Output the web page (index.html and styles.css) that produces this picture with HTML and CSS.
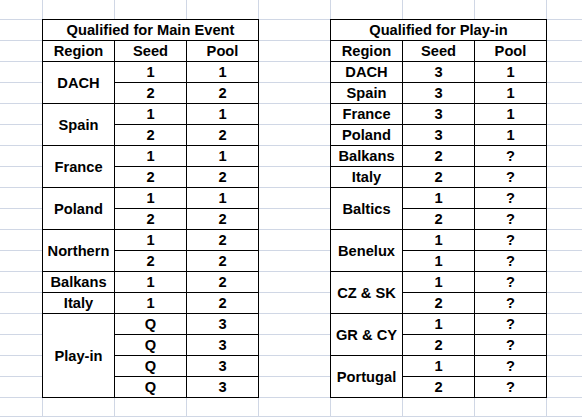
FILE: index.html
```html
<!DOCTYPE html>
<html lang="en">
<head>
  <meta charset="UTF-8">
  <title>Qualified</title>
  <link rel="stylesheet" href="styles.css">
</head>
<body>
  <div class="sheet">
    <div class="top-row"></div>
    <div class="tables">
      <div class="qual">
        <div class="cell title">Qualified for Main Event</div>
        <div class="cell">Region</div><div class="cell">Seed</div><div class="cell">Pool</div>
        <div class="cell span2">DACH</div><div class="cell">1</div><div class="cell">1</div><div class="cell">2</div><div class="cell">2</div>
        <div class="cell span2">Spain</div><div class="cell">1</div><div class="cell">1</div><div class="cell">2</div><div class="cell">2</div>
        <div class="cell span2">France</div><div class="cell">1</div><div class="cell">1</div><div class="cell">2</div><div class="cell">2</div>
        <div class="cell span2">Poland</div><div class="cell">1</div><div class="cell">1</div><div class="cell">2</div><div class="cell">2</div>
        <div class="cell span2">Northern</div><div class="cell">1</div><div class="cell">2</div><div class="cell">2</div><div class="cell">2</div>
        <div class="cell">Balkans</div><div class="cell">1</div><div class="cell">2</div>
        <div class="cell">Italy</div><div class="cell">1</div><div class="cell">2</div>
        <div class="cell span4">Play-in</div>
        <div class="cell">Q</div><div class="cell">3</div>
        <div class="cell">Q</div><div class="cell">3</div>
        <div class="cell">Q</div><div class="cell">3</div>
        <div class="cell">Q</div><div class="cell">3</div>
      </div>

      <div class="qual">
        <div class="cell title">Qualified for Play-in</div>
        <div class="cell">Region</div><div class="cell">Seed</div><div class="cell">Pool</div>
        <div class="cell">DACH</div><div class="cell">3</div><div class="cell">1</div>
        <div class="cell">Spain</div><div class="cell">3</div><div class="cell">1</div>
        <div class="cell">France</div><div class="cell">3</div><div class="cell">1</div>
        <div class="cell">Poland</div><div class="cell">3</div><div class="cell">1</div>
        <div class="cell">Balkans</div><div class="cell">2</div><div class="cell">?</div>
        <div class="cell">Italy</div><div class="cell">2</div><div class="cell">?</div>
        <div class="cell span2">Baltics</div><div class="cell">1</div><div class="cell">?</div><div class="cell">2</div><div class="cell">?</div>
        <div class="cell span2">Benelux</div><div class="cell">1</div><div class="cell">?</div><div class="cell">1</div><div class="cell">?</div>
        <div class="cell span2">CZ &amp; SK</div><div class="cell">1</div><div class="cell">?</div><div class="cell">2</div><div class="cell">?</div>
        <div class="cell span2">GR &amp; CY</div><div class="cell">1</div><div class="cell">?</div><div class="cell">2</div><div class="cell">?</div>
        <div class="cell span2">Portugal</div><div class="cell">1</div><div class="cell">?</div><div class="cell">2</div><div class="cell">?</div>
      </div>
    </div>
    <div class="bottom-row"></div>
  </div>
</body>
</html>
```

FILE: styles.css
```css
* {
  margin: 0;
  padding: 0;
  box-sizing: border-box;
}

body {
  font-family: "Liberation Sans", Arial, sans-serif;
  background: #ffffff;
  width: 582px;
  height: 417px;
  overflow: hidden;
}

/* excel gridlines: columns 72px, rows 21px */
.sheet {
  height: 417px;
  display: flex;
  flex-direction: column;
  background-image:
    linear-gradient(to right, #d0d7e5 1px, transparent 1px),
    linear-gradient(to bottom, #d0d7e5 1px, transparent 1px);
  background-size: 72px 100%, 100% 21px;
  background-position: 42px 0, 0 19px;
}

.top-row {
  height: 19px;
}

.tables {
  display: flex;
  gap: 71px;
  padding-left: 42px;
}

.bottom-row {
  height: 19px;
  border-bottom: 1px solid #d0d7e5;
}

.qual {
  display: grid;
  grid-template-columns: repeat(3, 71px);
  grid-auto-rows: 20px;
  gap: 1px;
  padding: 1px;
  background: #000000;
}

.cell {
  background: #ffffff;
  display: flex;
  justify-content: center;
  align-items: center;
  font-size: 11pt;
  font-weight: bold;
  color: #000000;
  white-space: nowrap;
}

.title {
  grid-column: span 3;
}

.span2 {
  grid-row: span 2;
}

.span4 {
  grid-row: span 4;
}
```
